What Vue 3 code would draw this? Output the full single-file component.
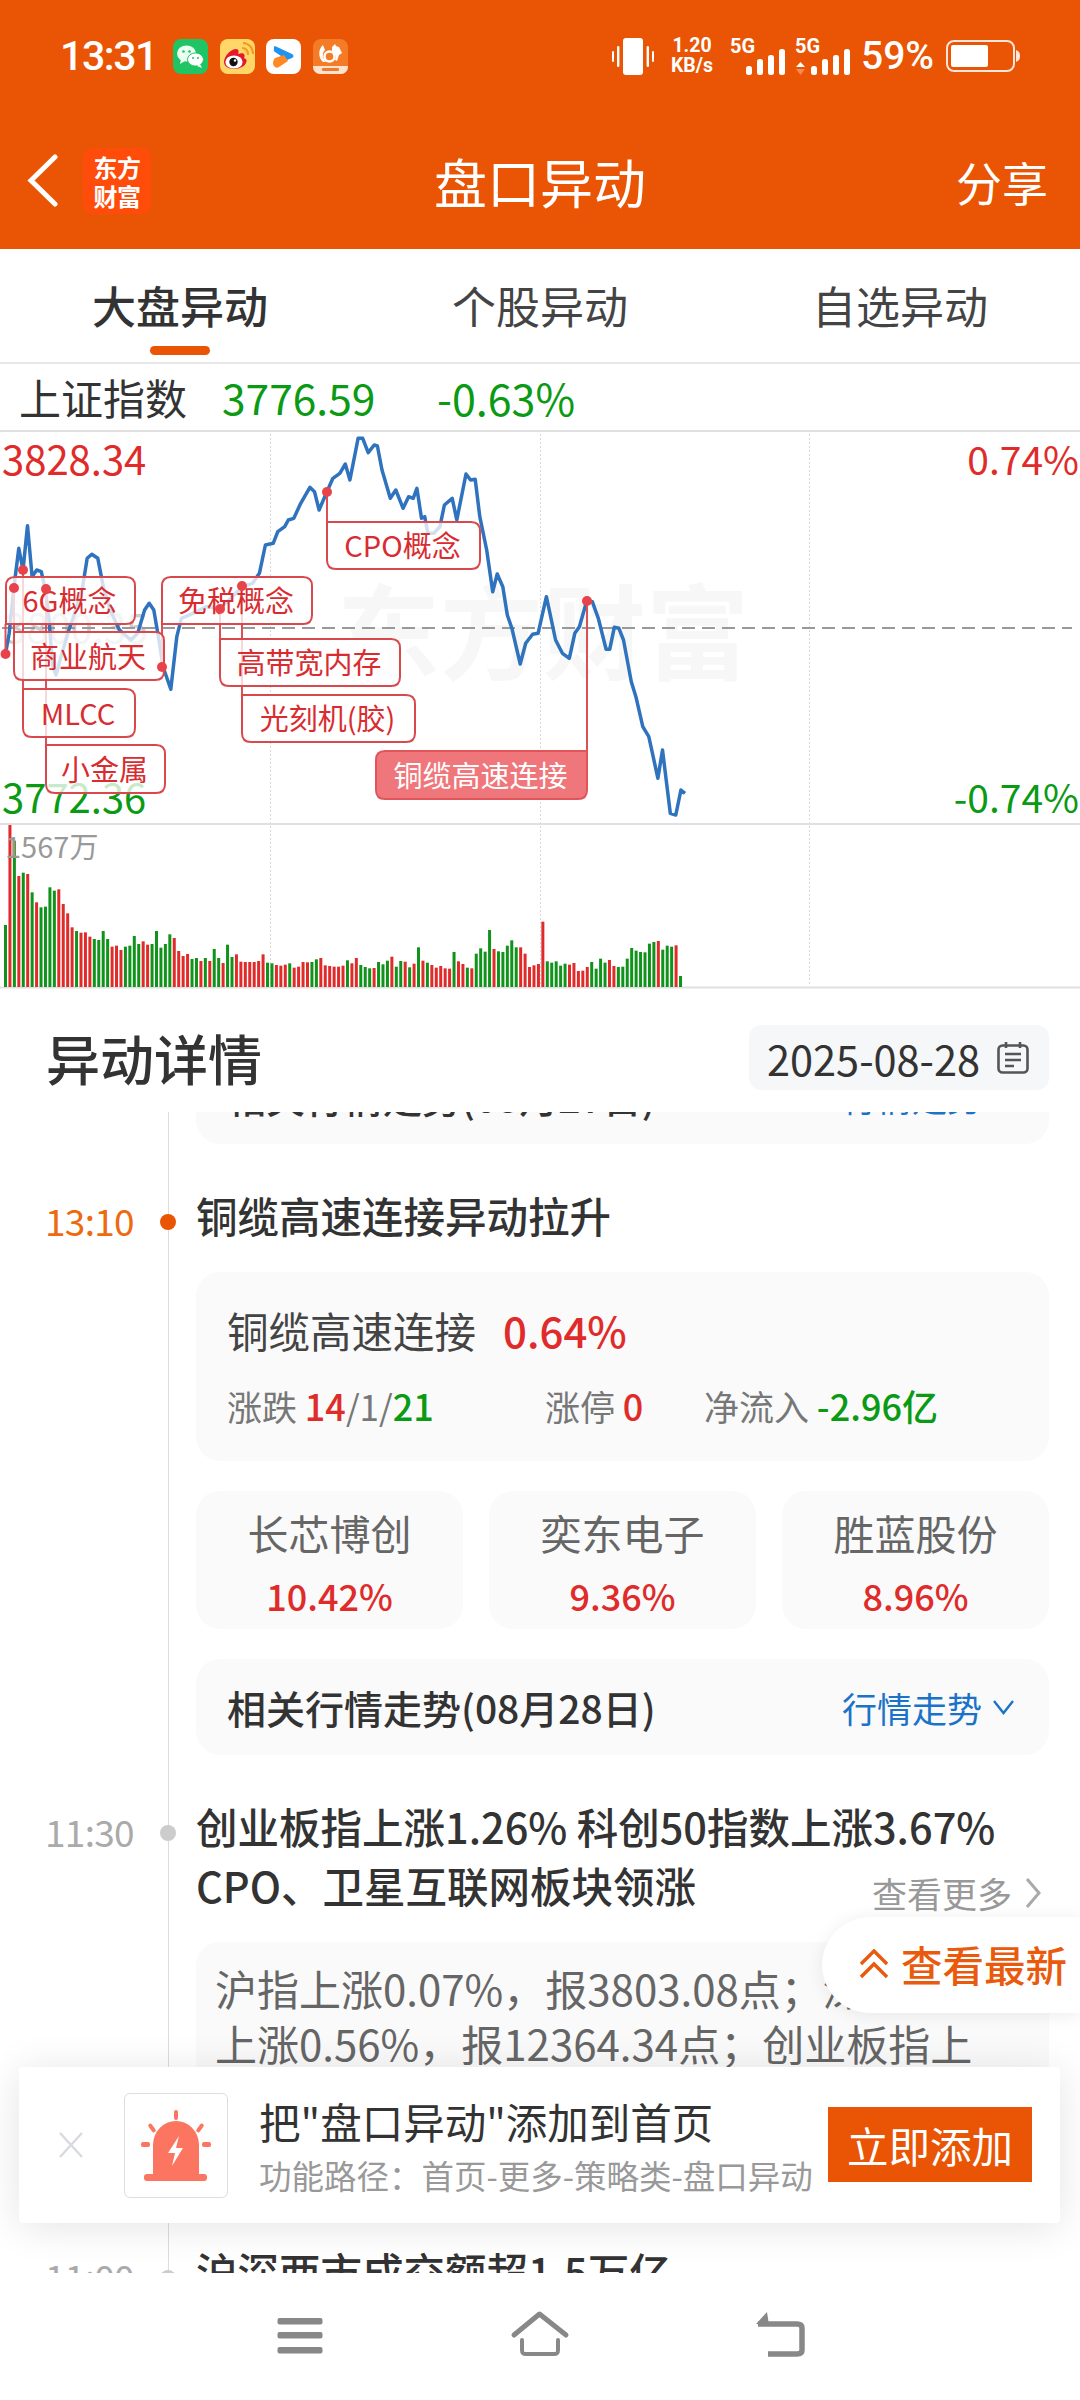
<script setup>
import { computed } from 'vue'

// Intraday index trace, sampled on a 1568-wide grid starting at y = 370.
const trace = [[12,852],[20,790],[30,655],[41,535],[50,600],[60,467],[70,620],[80,600],[90,605],[98,655],[105,720],[115,890],[122,915],[135,850],[150,780],[165,720],[180,650],[190,565],[200,553],[213,565],[225,650],[240,720],[260,780],[285,810],[300,790],[315,720],[325,700],[335,720],[345,800],[355,890],[372,958],[385,800],[395,745],[420,730],[450,710],[480,715],[528,650],[550,640],[565,610],[578,525],[595,520],[605,485],[620,470],[628,450],[640,445],[655,400],[675,352],[685,365],[695,420],[712,365],[725,325],[740,310],[752,282],[762,330],[780,205],[790,205],[802,248],[815,225],[822,228],[832,300],[850,385],[862,360],[878,415],[890,380],[900,385],[908,355],[918,445],[925,440],[932,490],[945,490],[958,470],[968,405],[985,385],[995,450],[1015,312],[1025,330],[1035,328],[1045,440],[1060,540],[1073,665],[1083,612],[1095,650],[1105,735],[1115,775],[1133,882],[1145,820],[1160,793],[1172,790],[1190,680],[1210,810],[1225,850],[1240,865],[1252,790],[1262,770],[1278,692],[1290,695],[1303,745],[1320,838],[1328,838],[1338,772],[1348,775],[1358,810],[1375,935],[1385,980],[1400,1070],[1413,1100],[1433,1225],[1443,1140],[1460,1330],[1472,1335],[1483,1260],[1492,1270]]
const px = (x) => x / 2.178
const py = (y) => 370 + y / 3
const tracePath = computed(() => trace.map(([x, y], i) => `${i ? 'L' : 'M'}${px(x).toFixed(1)} ${py(y).toFixed(1)}`).join(''))

// Per-minute volume: bar top on the same grid, positive = up (red), negative = down (green).
const volume = [-375,75,-122,228,-218,222,-277,307,-322,-320,-262,-272,268,312,340,382,-393,398,397,410,-417,-420,-393,-417,440,437,450,-440,-437,-408,-432,424,434,-432,-393,-443,-432,-403,414,453,468,462,-477,-474,483,-474,483,-447,-474,489,-434,-471,463,485,486,486,486,483,463,-488,-490,495,497,494,-490,503,500,486,487,-486,-478,474,496,498,500,500,497,-481,490,474,-495,-501,-505,504,-486,-493,-482,470,-500,-483,485,-502,491,-442,482,-488,495,503,498,505,506,-456,484,492,-503,505,-461,-445,-455,-390,447,-454,-456,-437,-421,-442,442,461,501,496,492,365,-484,-488,-484,-497,-491,494,489,513,512,501,-486,-506,-476,-488,480,498,-501,-500,-476,-444,-452,-456,-457,-431,-426,423,-449,-437,-440,436,-528]
const bars = computed(() => volume.map((v, i) => {
  const top = 800 + Math.abs(v) / 3
  return { x: 4 + i * 4.441, y: top, h: 987 - top, up: v > 0 }
}))

// Event tags on the chart; `sq` is the corner that the stem attaches to.
const roundedBox = (x, y, w, h, sq) => {
  const r = 9
  const c = (name) => (name === sq ? 0 : r)
  const tl = c('tl'), tr = c('tr'), br = c('br'), bl = c('bl')
  return `M${x + tl} ${y}H${x + w - tr}Q${x + w} ${y} ${x + w} ${y + tr}V${y + h - br}Q${x + w} ${y + h} ${x + w - br} ${y + h}H${x + bl}Q${x} ${y + h} ${x} ${y + h - bl}V${y + tl}Q${x} ${y} ${x + tl} ${y}Z`
}
const tags = [
  { text: '6G概念', x: 6, y: 577, w: 129, h: 47, sq: 'bl', stem: [5.5, 652, 624], dot: [5.5, 654] },
  { text: '免税概念', x: 162, y: 577, w: 150, h: 47, sq: 'bl', stem: [162, 667, 624], dot: [162, 667] },
  { text: 'CPO概念', x: 327, y: 522, w: 153, h: 47, sq: 'tl', stem: [327, 492, 522], dot: [327, 492] },
  { text: '商业航天', x: 14, y: 632, w: 150, h: 48, sq: 'tl', stem: [14, 588, 632], dot: [14, 588] },
  { text: '高带宽内存', x: 220, y: 639, w: 180, h: 47, sq: 'tl', stem: [220, 609, 639], dot: [220, 609] },
  { text: 'MLCC', x: 23, y: 689, w: 112, h: 48, sq: 'tl', stem: [23, 570, 689], dot: [23, 570] },
  { text: '光刻机(胶)', x: 242, y: 695, w: 173, h: 47, sq: 'tl', stem: [242, 586, 695], dot: [242, 586] },
  { text: '小金属', x: 46, y: 745, w: 119, h: 48, sq: 'tl', stem: [46, 589, 745], dot: [46, 589] },
  { text: '铜缆高速连接', x: 376, y: 751, w: 211, h: 48, sq: 'tr', stem: [587, 601, 751], dot: [587, 601], active: true },
].map((t) => ({ ...t, d: roundedBox(t.x, t.y, t.w, t.h, t.sq) }))

const stocks = [
  { name: '长芯博创', pct: '10.42%' },
  { name: '奕东电子', pct: '9.36%' },
  { name: '胜蓝股份', pct: '8.96%' },
]
</script>

<template>
  <div class="page">
    <header class="top">
      <div class="status">
        <span class="clock">13:31</span>
        <div class="notif">
          <svg class="tile" viewBox="0 0 35 35">
            <rect width="35" height="35" rx="8" fill="#1fc465" />
            <ellipse cx="13.5" cy="14.5" rx="9.5" ry="8" fill="#eafff0" />
            <path d="M8 20l-1 5 5-3z" fill="#eafff0" />
            <ellipse cx="22.5" cy="20.5" rx="8" ry="6.6" fill="#fff" stroke="#1fc465" />
            <path d="M27 25l2 4-5-2z" fill="#fff" />
            <circle cx="10.5" cy="12.5" r="1.3" fill="#1fc465" /><circle cx="16.5" cy="12.5" r="1.3" fill="#1fc465" />
            <circle cx="20" cy="19" r="1" fill="#1fc465" /><circle cx="25" cy="19" r="1" fill="#1fc465" />
          </svg>
          <svg class="tile" viewBox="0 0 35 35">
            <rect width="35" height="35" rx="8" fill="#ffd768" />
            <path d="M4 23c0-6 7-13 12-13 3 0 3 3 2 5 5-2 8 0 6 4 3 1 3 3 2 5-2 4-8 6-12 6-6 0-10-3-10-7z" fill="#e6162d" />
            <ellipse cx="14" cy="23" rx="8.6" ry="6.6" fill="#fff" />
            <circle cx="13.5" cy="23" r="4.2" fill="#111" /><circle cx="15" cy="21.5" r="1.2" fill="#fff" />
            <path d="M22 9c4 0 6 3 6 7M23 4c6 0 10 5 10 11" fill="none" stroke="#f39a1f" stroke-width="2" />
          </svg>
          <svg class="tile" viewBox="0 0 35 35">
            <rect width="35" height="35" rx="8" fill="#fff" />
            <path d="M9 7l17 8c2 1 2 3 0 4l-5 2L9 13c-2-1-1-7 0-6z" fill="#1f93f0" />
            <path d="M9 19l9-3 4 6-9 6c-3 2-6-1-6-4 0-2 1-4 2-5z" fill="#ff8a24" />
          </svg>
          <svg class="tile" viewBox="0 0 35 35">
            <rect width="35" height="35" rx="8" fill="#f47c26" />
            <path d="M10 6c-5 4-5 13 0 17h3c-4-4-4-9-1-12z" fill="#fff" />
            <circle cx="16.500" cy="17.500" r="5" fill="none" stroke="#fff" stroke-width="2.4" />
            <path d="M19 8l3-3 1 2 3 1 3 6-3 2-2 6-2-1c1-3 1-6-3-8z" fill="#fff" />
            <path d="M0 27h35v1a7 7 0 0 1-7 7H7a7 7 0 0 1-7-7z" fill="#fde3cf" />
            <rect x="9" y="29" width="17" height="3" rx="1" fill="#ef7b2a" />
          </svg>
        </div>
        <div class="sys">
          <svg class="vib" viewBox="0 0 42 37" fill="#fff">
            <rect x="11" y="0" width="20" height="37" rx="3" />
            <rect x="0" y="13" width="2" height="11" rx="1" /><rect x="5" y="8" width="2.4" height="21" rx="1.2" />
            <rect x="34.6" y="8" width="2.4" height="21" rx="1.2" /><rect x="40" y="13" width="2" height="11" rx="1" />
          </svg>
          <div class="speed"><span>1.20</span><span>KB/s</span></div>
          <svg class="signal" viewBox="0 0 54 37" fill="#fff">
            <text x="-1" y="15" class="g5">5G</text>
            <rect x="15" y="28" width="6" height="9" rx="2.5" /><rect x="26" y="21" width="6" height="16" rx="2.5" />
            <rect x="37" y="17" width="6" height="20" rx="2.5" /><rect x="48" y="11" width="6" height="26" rx="2.5" />
          </svg>
          <svg class="signal second" viewBox="0 0 54 37" fill="#fff">
            <text x="-1" y="15" class="g5">5G</text>
            <path d="M0 29l4.5-5 4.5 5z" /><path d="M0 31l4.5 6 4.5-6z" fill="#f58a55" />
            <rect x="15" y="28" width="6" height="9" rx="2.5" /><rect x="26" y="21" width="6" height="16" rx="2.5" />
            <rect x="37" y="17" width="6" height="20" rx="2.5" /><rect x="48" y="11" width="6" height="26" rx="2.5" />
          </svg>
          <span class="batt-pct">59%</span>
          <svg class="batt" viewBox="0 0 74 32">
            <rect x="1" y="1" width="67" height="30" rx="7" fill="none" stroke="#fff" stroke-opacity=".85" stroke-width="2" />
            <rect x="5" y="5" width="37" height="22" rx="2" fill="#fff" />
            <path d="M70 10c3 1 4 3 4 6s-1 5-4 6z" fill="#fff" fill-opacity=".85" />
          </svg>
        </div>
      </div>
      <div class="appbar">
        <svg class="back" viewBox="0 0 31 53"><path d="M28 3L4 26.5 28 50" fill="none" stroke="#fff" stroke-width="5" stroke-linecap="round" stroke-linejoin="miter" /></svg>
        <div class="logo"><span>东方</span><span>财富</span></div>
        <h1 class="appbar-title">盘口异动</h1>
        <span class="share">分享</span>
      </div>
    </header>

    <nav class="tabs">
      <div class="tab on">大盘异动<i></i></div>
      <div class="tab">个股异动</div>
      <div class="tab">自选异动</div>
    </nav>

    <div class="quote">
      <span class="q-name">上证指数</span>
      <span class="q-price">3776.59</span>
      <span class="q-pct">-0.63%</span>
    </div>

    <svg class="chart" viewBox="0 429 1080 561" width="1080" height="561">
      <text x="337" y="672" class="mark">东方财富</text>
      <g class="grid">
        <line x1="270.5" y1="430" x2="270.5" y2="986" /><line x1="540.5" y1="430" x2="540.5" y2="986" /><line x1="809.5" y1="430" x2="809.5" y2="986" />
      </g>
      <line x1="0" y1="431" x2="1080" y2="431" class="rule" />
      <line x1="0" y1="824" x2="1080" y2="824" class="rule" />
      <line x1="0" y1="987.5" x2="1080" y2="987.5" class="rule" />
      <text x="4" y="643" class="axis ghost">3800.35</text>
      <line x1="2" y1="628" x2="1072" y2="628" class="mid" />
      <rect v-for="(b, i) in bars" :key="i" :x="b.x" :y="b.y" width="3" :height="b.h" :class="b.up ? 'up' : 'down'" />
      <path :d="tracePath" class="trace" />
      <text x="2" y="475" class="axis red">3828.34</text>
      <text x="2" y="813" class="axis green">3772.36</text>
      <text x="1079" y="475" class="axis red end">0.74%</text>
      <text x="1079" y="813" class="axis green end">-0.74%</text>
      <text x="5" y="858" class="vol">1567万</text>
      <line v-for="t in tags" :key="t.text + 'stem'" :x1="t.stem[0]" :y1="t.stem[1]" :x2="t.stem[0]" :y2="t.stem[2]" class="stem" />
      <g v-for="t in tags" :key="t.text">
        <path :d="t.d" :class="t.active ? 'tag active' : 'tag'" />
        <text :x="t.x + t.w / 2 - 1" :y="t.y + t.h / 2 - 1.5" :class="t.active ? 'tag-text active' : 'tag-text'">{{ t.text }}</text>
      </g>
      <circle v-for="t in tags" :key="t.text + 'dot'" :cx="t.dot[0]" :cy="t.dot[1]" r="5" class="pin" />
    </svg>

    <div class="detail-head">
      <h2>异动详情</h2>
      <div class="date">
        <span>2025-08-28</span>
        <svg viewBox="0 0 32 33" width="32" height="33" fill="none" stroke="#555" stroke-width="2.6">
          <rect x="1.5" y="4.5" width="29" height="27" rx="4" />
          <path d="M9 1v6M23 1v6M8 13h16M8 19h16M8 25h9" />
        </svg>
      </div>
    </div>

    <section class="feed">
      <div class="feed-inner">
        <div class="trend prev">
          <b>相关行情走势(08月27日)</b>
          <span class="trend-link">行情走势</span>
        </div>

        <article class="item">
          <div class="time live">13:10<i class="node live"></i></div>
          <div class="body">
            <h3>铜缆高速连接异动拉升</h3>
            <div class="card sector">
              <div class="sector-top"><span>铜缆高速连接</span><b class="red">0.64%</b></div>
              <div class="sector-stats">
                <span>涨跌 <em class="red">14</em>/1/<em class="green">21</em></span>
                <span>涨停 <em class="red">0</em></span>
                <span>净流入 <em class="green">-2.96亿</em></span>
              </div>
            </div>
            <div class="stocks">
              <div v-for="s in stocks" :key="s.name" class="card stock">
                <span>{{ s.name }}</span><b>{{ s.pct }}</b>
              </div>
            </div>
            <div class="trend">
              <b>相关行情走势(08月28日)</b>
              <span class="trend-link">行情走势
                <svg viewBox="0 0 23 18" width="23" height="18"><path d="M2 3l9.500 12L21 3" fill="none" stroke="#1a73c8" stroke-width="2.4" /></svg>
              </span>
            </div>
          </div>
        </article>

        <article class="item">
          <div class="time">11:30<i class="node"></i></div>
          <div class="body">
            <h3 class="with-more">创业板指上涨1.26% 科创50指数上涨3.67%<br />CPO、卫星互联网板块领涨
              <span class="more">查看更多
                <svg viewBox="0 0 16 32" width="16" height="32"><path d="M2 2l12 14L2 30" fill="none" stroke="#aaa" stroke-width="3" /></svg>
              </span>
            </h3>
            <div class="card summary">
              <p>沪指上涨0.07%，报3803.08点；深证成指</p>
              <p>上涨0.56%，报12364.34点；创业板指上</p>
            </div>
          </div>
        </article>

        <article class="item">
          <div class="time">11:00<i class="node"></i></div>
          <div class="body"><h3>沪深两市成交额超1.5万亿</h3></div>
        </article>
      </div>
    </section>

    <footer class="navbar">
      <svg viewBox="0 0 60 60" width="60" height="60" fill="#888">
        <rect x="7.5" y="14" width="45" height="6.5" rx="2" /><rect x="7.5" y="28" width="45" height="6.5" rx="2" /><rect x="7.5" y="43" width="45" height="6.5" rx="2" />
      </svg>
      <svg viewBox="0 0 60 60" width="60" height="60" fill="none" stroke="#888" stroke-width="5" stroke-linecap="round" stroke-linejoin="round">
        <path d="M4 31L29.500 10 56 31" />
        <path d="M12 36v10c0 3 1 4 4 4h28c3 0 4-1 4-4V36" stroke-width="4" />
      </svg>
      <svg viewBox="0 0 60 60" width="60" height="60" fill="none" stroke="#888" stroke-width="5.500" stroke-linejoin="round">
        <path d="M8 20h39c3 0 5 1 5 4v22c0 3-2 4-5 4H18" />
        <path d="M17 8L6 20l13 1z" fill="#888" stroke="none" />
      </svg>
    </footer>

    <button class="latest">
      <svg viewBox="0 0 28 30" width="28" height="30" fill="none" stroke="#ea5a0c" stroke-width="3.400"><path d="M1 15L14 2l13 13M1 28l13-13 13 13" /></svg>
      查看最新
    </button>

    <aside class="promo">
      <svg class="promo-x" viewBox="0 0 26 26" width="26" height="26"><path d="M2 1l22 24M24 1L2 25" stroke="#d7dae0" stroke-width="2.400" /></svg>
      <div class="promo-icon">
        <svg viewBox="0 0 104 105" width="104" height="105" fill="#fb7560">
          <path d="M29 82V52a23 24 0 0 1 46 0v30z" />
          <rect x="20" y="81" width="63" height="7" rx="3" />
          <rect x="50" y="17" width="4" height="10" rx="2" />
          <rect x="26" y="30" width="4" height="10" rx="2" transform="rotate(-35 28 35)" />
          <rect x="74" y="30" width="4" height="10" rx="2" transform="rotate(35 76 35)" />
          <rect x="17" y="49" width="9" height="5" rx="2" /><rect x="78" y="49" width="9" height="5" rx="2" />
          <path d="M55 43L44 60h7l-3 13 11-18h-7z" fill="#fff" />
        </svg>
      </div>
      <div class="promo-text">
        <strong>把"盘口异动"添加到首页</strong>
        <small>功能路径：首页-更多-策略类-盘口异动</small>
      </div>
      <button class="promo-btn">立即添加</button>
    </aside>
  </div>
</template>

<style>
html, body { margin: 0; background: #fff; }
</style>

<style scoped>
.page {
  position: relative;
  width: 1080px;
  height: 2400px;
  overflow: hidden;
  display: flex;
  flex-direction: column;
  background: #fff;
  color: #333;
  font-family: "Noto Sans CJK SC", sans-serif;
}
h1, h2, h3, p { margin: 0; font-weight: 400; }
em { font-style: normal; }

/* orange top area */
.top { background: #e95504; height: 249px; flex: none; color: #fff; }
.status { height: 112px; display: flex; align-items: center; padding-left: 60px; box-sizing: border-box; }
.clock { font-family: Roboto, sans-serif; font-size: 41px; font-weight: 500; letter-spacing: -1.4px; width: 113px; }
.notif { display: flex; gap: 11.700px; }
.tile { width: 35px; height: 35px; display: block; }
.sys { margin-left: auto; display: flex; align-items: center; padding-right: 60px; }
.vib { width: 42px; height: 37px; }
.speed { display: flex; flex-direction: column; margin-left: 15px; font-family: Roboto, sans-serif; font-size: 19.500px; font-weight: 700; line-height: 20px; align-items: center; width: 46px; }
.signal { width: 54px; height: 37px; margin-left: 16px; overflow: visible; }
.signal.second { margin-left: 11px; }
.g5 { font-family: Roboto, sans-serif; font-size: 20px; font-weight: 700; fill: #fff; }
.batt-pct { font-family: Roboto, sans-serif; font-size: 39px; font-weight: 500; margin-left: 11px; width: 85px; }
.batt { width: 74px; height: 32px; }

.appbar { position: relative; height: 137px; display: flex; align-items: center; padding: 0 32px 0 27px; }
.back { width: 31px; height: 53px; }
.logo { margin-left: 25px; width: 68px; height: 66px; border-radius: 10px; background: #ff4c0a; display: flex; flex-direction: column; align-items: center; justify-content: center; font-weight: 700; font-size: 24px; line-height: 29px; letter-spacing: -.5px; }
.appbar-title { position: absolute; left: 0; right: 0; text-align: center; font-size: 53px; pointer-events: none; }
.share { margin-left: auto; font-size: 46px; }

/* tabs */
.tabs { flex: none; height: 113px; display: grid; grid-template-columns: repeat(3, 1fr); border-bottom: 2px solid #e8e8e8; }
.tab { position: relative; height: 111px; text-align: center; font-size: 44px; line-height: 113px; color: #444; }
.tab.on { font-weight: 500; color: #333; }
.tab i { position: absolute; left: 150px; bottom: 5px; width: 60px; height: 9px; border-radius: 5px; background: #e95504; }

/* quote row */
.quote { flex: none; height: 65px; display: flex; align-items: center; font-size: 42px; padding: 0 0 0 19px; box-sizing: border-box; }
.q-name { width: 203px; }
.q-price { width: 215px; color: #0a9a14; font-size: 42.500px; }
.q-pct { color: #0a9a14; font-size: 43px; }

/* chart */
.chart { flex: none; display: block; }
.mark { font-size: 103px; font-weight: 700; fill: #f7f7f7; }
.grid line { stroke: #d8d8d8; stroke-dasharray: 2 2; }
.rule { stroke: #e0e0e0; stroke-width: 2; }
.mid { stroke: #999; stroke-width: 2; stroke-dasharray: 13 7; }
.up { fill: #e02b2b; }
.down { fill: #10931a; }
.trace { fill: none; stroke: #2f72bd; stroke-width: 3.500; stroke-linejoin: round; }
.axis { font-size: 40px; }
.axis.ghost { fill: #ccc; }
.axis.red { fill: #e02b2b; }
.axis.green { fill: #0a9a14; }
.axis.end { text-anchor: end; font-size: 39px; }
.vol { font-size: 29px; fill: #999; }
.stem { stroke: #dc5055; stroke-width: 2; }
.tag { fill: rgba(255, 255, 255, .78); stroke: #d9484d; stroke-width: 2; }
.tag.active { fill: #ef777b; stroke: #e0555a; }
.tag-text { font-size: 29px; fill: #d92c30; text-anchor: middle; dominant-baseline: central; }
.tag-text.active { fill: #fff; }
.pin { fill: #e8434a; }

/* details heading */
.detail-head { flex: none; height: 122px; box-sizing: border-box; display: flex; justify-content: space-between; align-items: flex-start; padding: 33px 31px 0 46px; }
.detail-head h2 { font-size: 54px; font-weight: 500; line-height: 70px; }
.date { margin-top: 2px; width: 300px; height: 65px; box-sizing: border-box; border-radius: 12px; background: #f6f7f9; display: flex; align-items: center; justify-content: space-between; padding: 0 20px 0 18px; font-size: 41.500px; }

/* timeline feed */
.feed { flex: 1; min-height: 0; position: relative; overflow: hidden; }
.feed::before { content: ""; position: absolute; left: 167.500px; top: 0; bottom: 0; width: 1.500px; background: #ddd; }
.feed-inner { margin-top: -64px; padding: 0 31px 0 45px; }
.item { display: grid; grid-template-columns: 151px 1fr; margin-top: 44px; }
.time { position: relative; font-size: 37px; line-height: 59px; margin-top: 3px; color: #aaa; letter-spacing: -.7px; }
.time.live { color: #ee6a10; }
.node { position: absolute; right: 20px; top: 23px; width: 16px; height: 16px; border-radius: 50%; background: #ccc; }
.node.live { background: #e95504; }
.body h3 { font-size: 41.500px; font-weight: 500; line-height: 59px; margin-top: -2px; color: #333; }
.card, .trend { background: #fafafa; border-radius: 24px; }

.sector { margin-top: 27px; height: 189px; box-sizing: border-box; padding: 33px 0 0 31px; }
.sector-top { display: flex; align-items: center; gap: 27px; font-size: 41.500px; line-height: 50px; color: #444; }
.sector-top b { font-size: 42px; font-weight: 500; }
.sector-stats { display: grid; grid-template-columns: 318px 159px auto; margin-top: 30px; font-size: 35px; line-height: 40px; color: #777; }
.sector-stats em { font-weight: 500; font-size: 36px; }
.red { color: #e02b2b; }
.green { color: #0a9a14; }

.stocks { display: grid; grid-template-columns: repeat(3, 1fr); gap: 26px; margin-top: 30px; }
.stock { height: 138px; box-sizing: border-box; padding-top: 16px; display: flex; flex-direction: column; align-items: center; font-size: 41px; line-height: 50px; color: #666; }
.stock b { margin-top: 13px; font-size: 36px; font-weight: 500; color: #e02b2b; }

.trend { margin-top: 30px; height: 96px; display: flex; align-items: center; justify-content: space-between; padding: 0 34px 0 31px; font-size: 39px; }
.trend.prev { margin: 0 0 0 151px; padding-right: 67px; }
.trend b { font-weight: 500; }
.trend-link { display: flex; align-items: center; gap: 10px; font-size: 35px; color: #1a73c8; }

.with-more { position: relative; }
.more { position: absolute; right: 8px; top: 76px; display: flex; align-items: center; gap: 13px; font-size: 35px; line-height: 40px; font-weight: 400; color: #999; }
.summary { margin-top: 27px; height: 258px; box-sizing: border-box; padding: 18px 0 0 19px; font-size: 42px; line-height: 55px; color: #666; white-space: nowrap; overflow: hidden; }

/* system navigation */
.navbar { flex: none; position: relative; height: 127px; box-sizing: border-box; padding-top: 31px; background: #fff; display: grid; grid-template-columns: repeat(3, 240px); justify-content: center; justify-items: center; align-items: start; }

/* floating overlays */
.latest { position: absolute; left: 822px; top: 1917px; width: 258px; height: 96px; border: 0; border-radius: 48px 0 0 48px; background: #fff; box-shadow: 0 2px 18px rgba(0, 0, 0, .08); display: flex; align-items: center; gap: 13px; padding: 0 0 2px 38px; font: 500 41.500px "Noto Sans CJK SC", sans-serif; color: #ea5a0c; white-space: nowrap; }
.promo { position: absolute; left: 19px; top: 2067px; width: 1041px; height: 156px; border-radius: 4px; background: #fff; box-shadow: 0 4px 40px rgba(0, 0, 0, .11); display: flex; align-items: center; padding-left: 39px; box-sizing: border-box; }
.promo-icon { margin-left: 40px; width: 104px; height: 105px; box-sizing: border-box; border: 1px solid #ddd; border-radius: 6px; overflow: hidden; }
.promo-icon svg { display: block; margin: -1px; }
.promo-text { margin-left: 31px; display: flex; flex-direction: column; }
.promo-text strong { font-size: 41.500px; font-weight: 400; line-height: 56px; margin-top: -2px; color: #333; }
.promo-text small { font-size: 32.500px; line-height: 42px; margin-top: 5px; color: #999; white-space: nowrap; }
.promo-btn { position: absolute; right: 28px; top: 40px; width: 204px; height: 75px; border: 0; padding: 0; background: #e95504; color: #fff; font: 400 41.500px "Noto Sans CJK SC", sans-serif; }
</style>
